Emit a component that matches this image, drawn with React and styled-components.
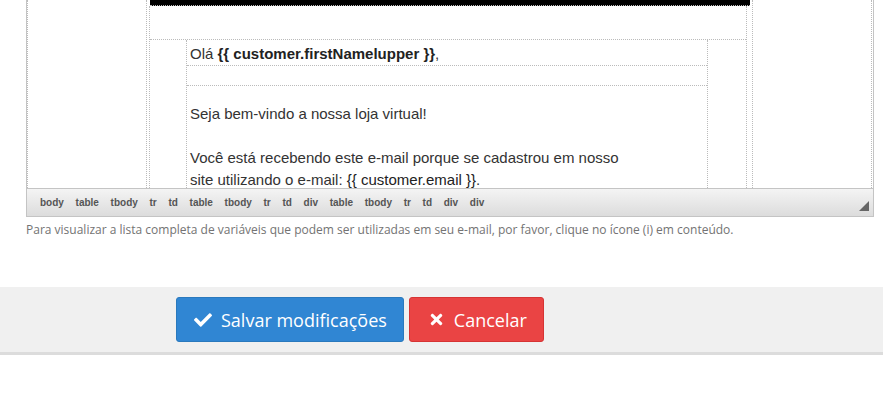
import React from 'react'
import styled, { createGlobalStyle } from 'styled-components'
import { FaCheck, FaTimes } from 'react-icons/fa'

const Global = createGlobalStyle`
body {
	margin: 0;
	background: #fff;
	font-family: "Open Sans", "Liberation Sans", sans-serif;
}
* {
	box-sizing: border-box;
}
`;

const Page = styled.div`
	width: 883px;
	height: 400px;
	overflow: hidden;
`;

const Editor = styled.div`
	margin-left: 26px;
	width: 848px;
	border: 1px solid #c4c4c4;
	border-top: 0;
	background: #fff;
`;

const EditArea = styled.div`
	height: 188px;
	overflow: hidden;
	display: flex;
	font-family: "Liberation Sans", Arial, sans-serif;
	font-size: 15px;
	line-height: 22px;
	color: #333;
`;

const OuterTable = styled.div`
	flex: 1;
	margin-right: 1px;
	border-left: 1px dotted #bbb;
	border-right: 1px dotted #bbb;
	display: flex;
	justify-content: center;
`;

const Column = styled.div`
	width: 607px;
	border-left: 1px dotted #bbb;
	border-right: 1px dotted #bbb;
	padding: 0 0 0 1px;
`;

const HeaderBar = styled.div`
	height: 6px;
	margin: 0 2px 0 2px;
	background: #000;
	border-bottom: 1px dotted #bbb;
`;

const BodyCell = styled.div`
	margin: 0 5px 0 1px;
	border-left: 1px dotted #bbb;
	border-right: 1px dotted #bbb;
	height: 200px;
`;

const Spacer = styled.div`
	height: 34px;
	border-bottom: 1px dotted #bbb;
`;

const ContentRow = styled.div`
	padding-left: 36px;
	padding-right: 38px;
`;

const InnerTable = styled.div`
	border-left: 1px dotted #bbb;
	border-right: 1px dotted #bbb;
	height: 200px;
`;

const Row = styled.div`
	padding: ${p => p.$top || 0}px 0 0 3px;
	height: ${p => p.$h}px;
	border-bottom: ${p => p.$last ? 'none' : '1px dotted #bbb'};
`;

const Line = styled.div`
	white-space: nowrap;
	margin-bottom: ${p => p.$gap ? '22px' : '0'};
`;

const Var = styled.span`
	color: #222;
	font-weight: ${p => p.$bold ? 'bold' : 'normal'};
`;

const StatusBar = styled.div`
	height: 28px;
	border-top: 1px solid #c4c4c4;
	background: linear-gradient(#f4f4f4, #dcdcdc);
	display: flex;
	align-items: center;
	padding-left: 13px;
	position: relative;
`;

const PathItem = styled.span`
	font-family: "Liberation Sans", Arial, sans-serif;
	font-weight: bold;
	font-size: 10px;
	color: #555;
	margin-right: 11.7px;
`;

const Resize = styled.div`
	position: absolute;
	right: 4px;
	bottom: 5px;
	width: 0;
	height: 0;
	border-left: 10px solid transparent;
	border-bottom: 10px solid #666;
`;

const Help = styled.p`
	margin: 5px 0 0 26px;
	font-size: 12px;
	line-height: 16px;
	color: #737373;
	white-space: nowrap;
`;

const Footer = styled.div`
	margin-top: 49px;
	height: 68px;
	background: #f0f0f0;
	border-bottom: 3px solid #dcdcdc;
	padding: 10px 0 0 176px;
	display: flex;
	gap: 5px;
	align-items: flex-start;
`;

const Button = styled.button`
	height: 45px;
	display: flex;
	align-items: center;
	gap: 9px;
	padding: 0 16px 0 ${p => p.$danger ? '18px' : '17px'};
	border-radius: 3px;
	border: 1px solid ${p => p.$danger ? '#d63434' : '#2a79bd'};
	background: ${p => p.$danger ? '#ea4444' : '#3086d3'};
	color: #fff;
	font-family: "Open Sans", sans-serif;
	font-size: 18px;
	cursor: pointer;
	svg {
		font-size: ${p => p.$danger ? '17px' : '18px'};
	}
`;

const path = ['body', 'table', 'tbody', 'tr', 'td', 'table', 'tbody', 'tr', 'td', 'div', 'table', 'tbody', 'tr', 'td', 'div', 'div']

export default function App() {
	return (
		<Page>
			<Global />
			<Editor>
				<EditArea>
					<OuterTable>
						<Column>
							<HeaderBar />
							<BodyCell>
								<Spacer />
								<ContentRow>
									<InnerTable>
										<Row $h={26} $top={3}>
											Olá <Var $bold>{'{{ customer.firstNamelupper }}'}</Var>,
										</Row>
										<Row $h={20} />
										<Row $h={120} $top={17} $last>
											<Line $gap>Seja bem-vindo a nossa loja virtual!</Line>
											<Line>Você está recebendo este e-mail porque se cadastrou em nosso</Line>
											<Line>site utilizando o e-mail: <Var>{'{{ customer.email }}'}</Var>.</Line>
										</Row>
									</InnerTable>
								</ContentRow>
							</BodyCell>
						</Column>
					</OuterTable>
				</EditArea>
				<StatusBar>
					{path.map((p, i) => <PathItem key={i}>{p}</PathItem>)}
					<Resize />
				</StatusBar>
			</Editor>
			<Help>Para visualizar a lista completa de variáveis que podem ser utilizadas em seu e-mail, por favor, clique no ícone (i) em conteúdo.</Help>
			<Footer>
				<Button><FaCheck />Salvar modificações</Button>
				<Button $danger><FaTimes />Cancelar</Button>
			</Footer>
		</Page>
	)
}
